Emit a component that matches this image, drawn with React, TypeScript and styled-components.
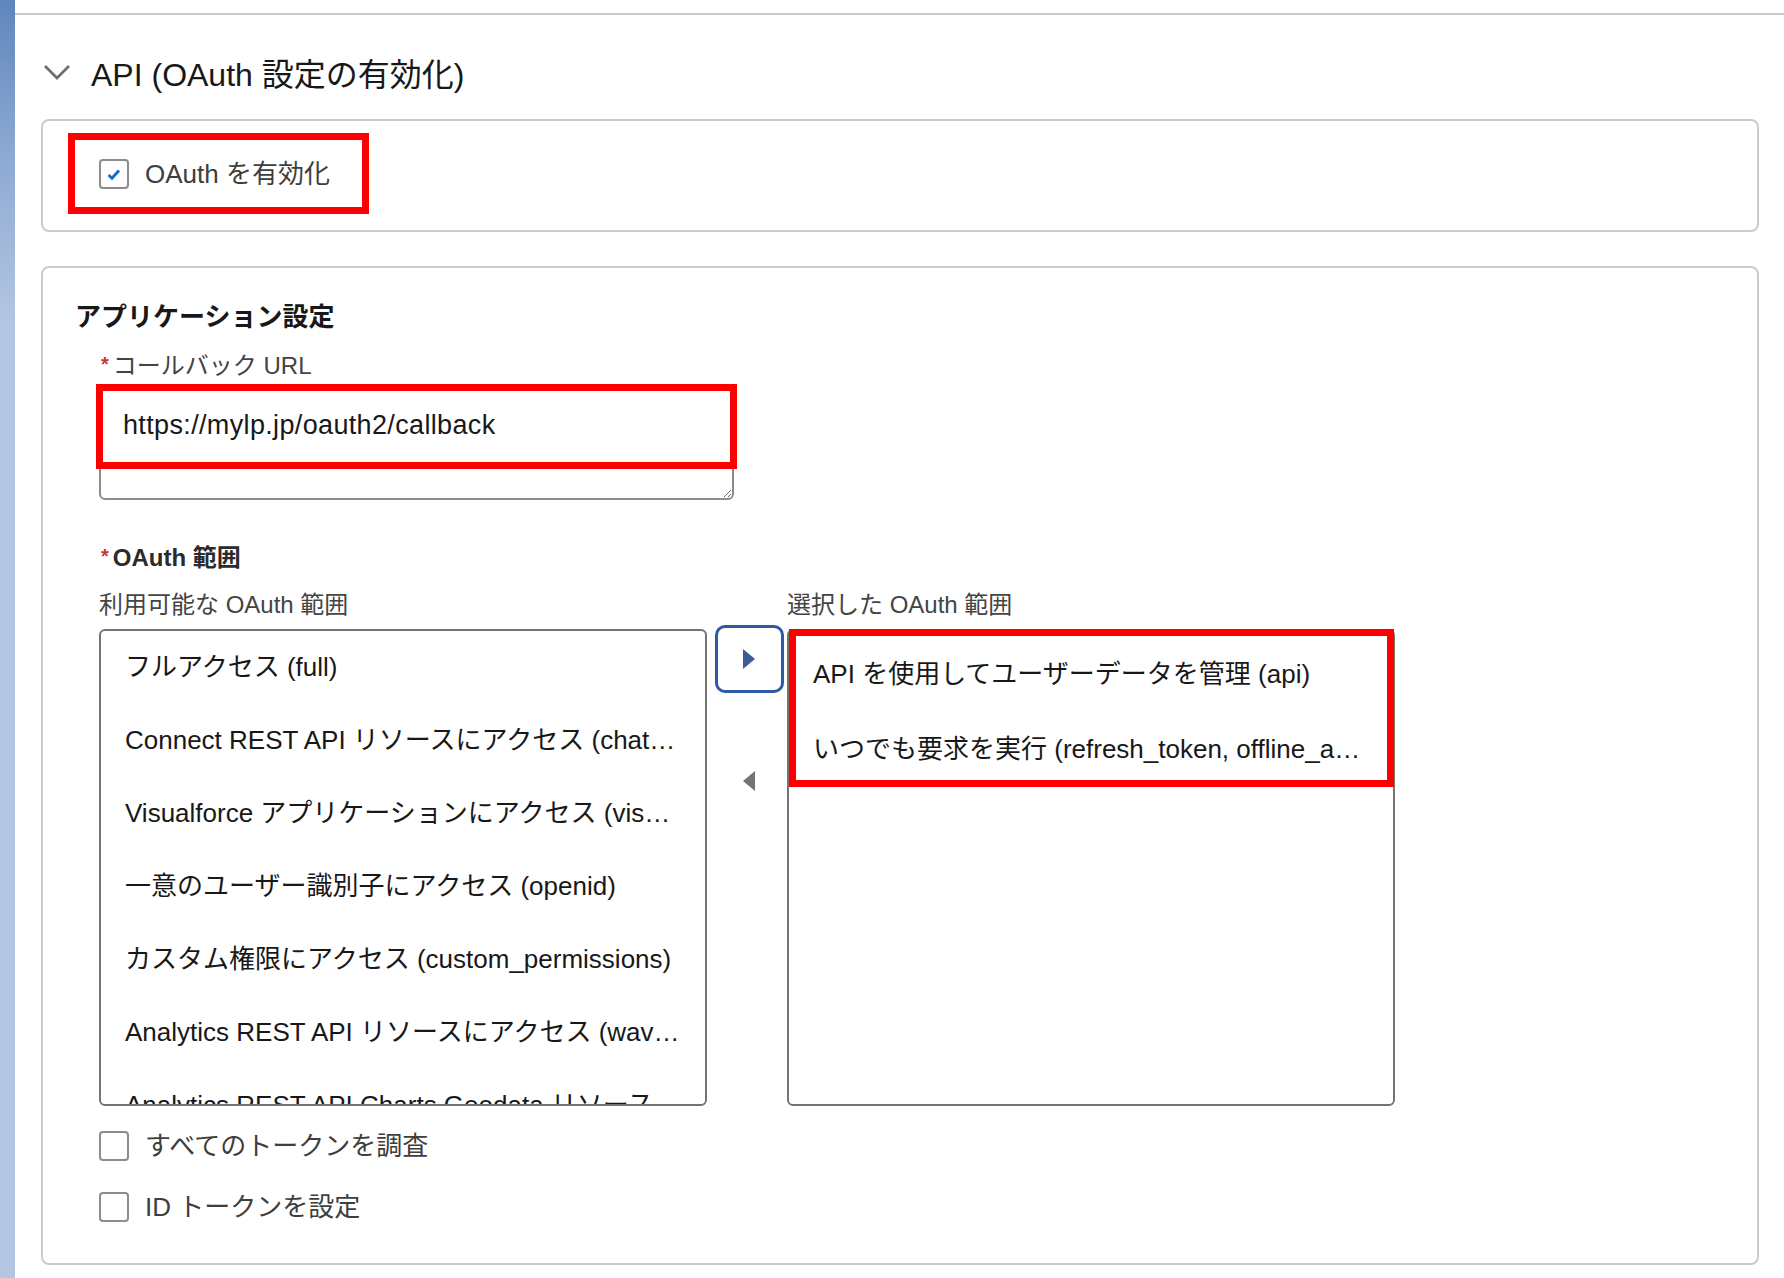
import React from 'react';
import styled, { createGlobalStyle } from 'styled-components';

const GlobalStyle = createGlobalStyle`
    * {
        box-sizing: border-box;
    }
    body {
        margin: 0;
        background: #ffffff;
        font-family: 'Liberation Sans', 'Noto Sans CJK JP', sans-serif;
        color: #181818;
    }
`;

const Page = styled.div`
    display: flex;
    min-height: 100vh;
`;

const SideStrip = styled.div`
    width: 15px;
    flex-shrink: 0;
    background: linear-gradient(180deg, #5f86bd 0, #8eaad3 160px, #b3c5e1 320px, #b3c5e1 100%);
`;

const Main = styled.main`
    flex: 1;
    margin-top: 13px;
    border-top: 2px solid #c9c9c9;
    padding: 0 25px 0 26px;
`;

const SectionHeader = styled.div`
    display: flex;
    align-items: center;
    gap: 20px;
    height: 40px;
    margin-top: 37px;
    padding-left: 2px;
`;

const SectionTitle = styled.h2`
    margin: 0;
    font-size: 32px;
    font-weight: 400;
    color: #181818;
`;

const Card = styled.section<{ $gap: number; $pad: string }>`
    margin-top: ${(p) => p.$gap}px;
    border: 2px solid #cbcbcb;
    border-radius: 8px;
    padding: ${(p) => p.$pad};
`;

const Highlight = styled.div`
    display: inline-flex;
    align-items: center;
    gap: 16px;
    height: 81px;
    padding: 0 32px 0 24px;
    border: 7px solid #ff0000;
`;

const Box = styled.span`
    display: inline-flex;
    align-items: center;
    justify-content: center;
    width: 30px;
    height: 30px;
    flex-shrink: 0;
    border: 2px solid #8c8c8c;
    border-radius: 4px;
    background: #ffffff;
`;

const CheckText = styled.span`
    font-size: 26px;
    line-height: 32px;
    color: #3e3e3c;
`;

const SubHeading = styled.h3`
    margin: 0;
    font-size: 26px;
    line-height: 34px;
    font-weight: 700;
    color: #181818;
`;

const FieldBlock = styled.div`
    padding-left: 24px;
`;

const Label = styled.div<{ $bold?: boolean; $top: number }>`
    margin-top: ${(p) => p.$top}px;
    padding-left: 2px;
    font-size: 24px;
    line-height: 32px;
    font-weight: ${(p) => (p.$bold ? 700 : 400)};
    color: ${(p) => (p.$bold ? '#2b2b2b' : '#444444')};
`;

const Required = styled.span`
    color: #c23934;
    font-weight: 700;
    margin-right: 4px;
    font-size: 20px;
    vertical-align: 3px;
`;

const TextAreaWrap = styled.div`
    position: relative;
    width: 635px;
    margin-top: 6px;
`;

const UrlInput = styled.textarea`
    display: block;
    width: 100%;
    height: 112px;
    padding: 19px 22px;
    border: 2px solid #8c8c8c;
    border-radius: 6px;
    font-family: 'Liberation Sans', 'Noto Sans CJK JP', sans-serif;
    font-size: 27px;
    letter-spacing: 0.35px;
    line-height: 32px;
    color: #181818;
    resize: vertical;
    outline: none;
`;

const RedFrame = styled.div<{ $top: number; $left: number; $width: number; $height: number }>`
    position: absolute;
    top: ${(p) => p.$top}px;
    left: ${(p) => p.$left}px;
    width: ${(p) => p.$width}px;
    height: ${(p) => p.$height}px;
    border: 7px solid #ff0000;
    pointer-events: none;
`;

const DualList = styled.div`
    display: grid;
    grid-template-columns: 608px 80px 608px;
    grid-template-rows: 32px 477px;
    row-gap: 8px;
    margin-top: 15px;
`;

const ColumnLabel = styled.div<{ $col: number }>`
    grid-column: ${(p) => p.$col};
    font-size: 24px;
    line-height: 32px;
    color: #444444;
`;

const ListColumn = styled.div<{ $col: number }>`
    grid-column: ${(p) => p.$col};
    grid-row: 2;
    position: relative;
`;

const ListBox = styled.div<{ $padTop: number }>`
    height: 100%;
    border: 2px solid #747474;
    border-radius: 6px;
    overflow: hidden;
    padding-top: ${(p) => p.$padTop}px;
`;

const ListItem = styled.div<{ $h: number }>`
    height: ${(p) => p.$h}px;
    line-height: ${(p) => p.$h}px;
    padding: 0 24px;
    font-size: 26px;
    color: #181818;
    white-space: nowrap;
    overflow: hidden;
    text-overflow: ellipsis;
`;

const MoveButtons = styled.div`
    grid-column: 2;
    grid-row: 2;
    display: flex;
    flex-direction: column;
    align-items: center;
    gap: 54px;
    margin-top: -4px;
    padding-left: 4px;
`;

const MoveButton = styled.button<{ $active?: boolean }>`
    display: flex;
    align-items: center;
    justify-content: center;
    width: 69px;
    height: 68px;
    padding: 0;
    background: #ffffff;
    border: ${(p) => (p.$active ? '3px solid #2a5ba3' : '3px solid transparent')};
    border-radius: 10px;
`;

const CheckRows = styled.div`
    display: flex;
    flex-direction: column;
    gap: 29px;
    margin-top: 24px;
`;

const CheckRow = styled.label`
    display: flex;
    align-items: center;
    gap: 16px;
`;

const Chevron = () => (
    <svg width="28" height="18" viewBox="0 0 28 18">
        <path d="M2 3 L14 15 L26 3" fill="none" stroke="#706e6b" strokeWidth="2.8" />
    </svg>
);

const Checkbox: React.FC<{ checked?: boolean }> = ({ checked }) => (
    <Box>
        {checked && (
            <svg width="18" height="18" viewBox="0 0 18 18">
                <path d="M3.5 10 L7 13.2 L14 5.5" fill="none" stroke="#0b6bd0" strokeWidth="2.8" />
            </svg>
        )}
    </Box>
);

const Triangle: React.FC<{ dir: 'left' | 'right'; color: string }> = ({ dir, color }) => (
    <svg width="14" height="22" viewBox="0 0 14 22">
        <path d={dir === 'right' ? 'M1 1 L13 11 L1 21 Z' : 'M13 1 L1 11 L13 21 Z'} fill={color} />
    </svg>
);

const available = [
    'フルアクセス (full)',
    'Connect REST API リソースにアクセス (chatter_api)',
    'Visualforce アプリケーションにアクセス (visualforce)',
    '一意のユーザー識別子にアクセス (openid)',
    'カスタム権限にアクセス (custom_permissions)',
    'Analytics REST API リソースにアクセス (wave_api)',
    'Analytics REST API Charts Geodata リソースにアクセス (eclair_api)',
];

const selected = ['API を使用してユーザーデータを管理 (api)', 'いつでも要求を実行 (refresh_token, offline_access)'];

const App: React.FC = () => {
    return (
        <>
            <GlobalStyle />
            <Page>
                <SideStrip />
                <Main>
                    <SectionHeader>
                        <Chevron />
                        <SectionTitle>API (OAuth 設定の有効化)</SectionTitle>
                    </SectionHeader>

                    <Card $gap={27} $pad="12px 25px 16px">
                        <Highlight>
                            <Checkbox checked />
                            <CheckText>OAuth を有効化</CheckText>
                        </Highlight>
                    </Card>

                    <Card $gap={34} $pad="32px 32px 40px">
                        <SubHeading>アプリケーション設定</SubHeading>
                        <FieldBlock>
                            <Label $top={14}>
                                <Required>*</Required>コールバック URL
                            </Label>
                            <TextAreaWrap>
                                <UrlInput readOnly defaultValue="https://mylp.jp/oauth2/callback" />
                                <RedFrame $top={-4} $left={-3} $width={641} $height={85} />
                            </TextAreaWrap>

                            <Label $bold $top={40}>
                                <Required>*</Required>OAuth 範囲
                            </Label>
                            <DualList>
                                <ColumnLabel $col={1}>利用可能な OAuth 範囲</ColumnLabel>
                                <ColumnLabel $col={3}>選択した OAuth 範囲</ColumnLabel>
                                <ListColumn $col={1}>
                                    <ListBox $padTop={0}>
                                        {available.map((item) => (
                                            <ListItem key={item} $h={73}>
                                                {item}
                                            </ListItem>
                                        ))}
                                    </ListBox>
                                </ListColumn>
                                <MoveButtons>
                                    <MoveButton $active>
                                        <Triangle dir="right" color="#3d5c91" />
                                    </MoveButton>
                                    <MoveButton>
                                        <Triangle dir="left" color="#747474" />
                                    </MoveButton>
                                </MoveButtons>
                                <ListColumn $col={3}>
                                    <ListBox $padTop={6}>
                                        {selected.map((item) => (
                                            <ListItem key={item} $h={75}>
                                                {item}
                                            </ListItem>
                                        ))}
                                    </ListBox>
                                    <RedFrame $top={0} $left={2} $width={605} $height={158} />
                                </ListColumn>
                            </DualList>

                            <CheckRows>
                                <CheckRow>
                                    <Checkbox />
                                    <CheckText>すべてのトークンを調査</CheckText>
                                </CheckRow>
                                <CheckRow>
                                    <Checkbox />
                                    <CheckText>ID トークンを設定</CheckText>
                                </CheckRow>
                            </CheckRows>
                        </FieldBlock>
                    </Card>
                </Main>
            </Page>
        </>
    );
};

export default App;
